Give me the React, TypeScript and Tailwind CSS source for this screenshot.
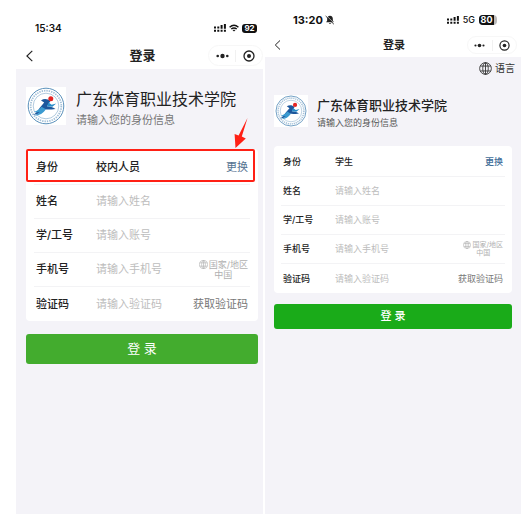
import { useId } from "react";
import clsx from "clsx";

type Variant = "large" | "small";

const fontStack = "font-['Inter','Noto_Sans_CJK_SC',sans-serif]";

const sizes = {
  large: {
    status: "h-[42px] pt-[14px] pl-[19px] pr-[6px]",
    time: "text-[10px] font-semibold",
    header: "h-[27px] pl-[6px]",
    back: "size-[16px]",
    heading: "text-[13px]",
    pill: "h-[21px] w-[55px]",
    dots: "h-[6px] w-[13px]",
    target: "size-[12px]",
    body: "pl-[10px] pr-[5px] pt-[18px]",
    school: "mb-[19px] gap-[10px]",
    logo: "h-[38px] w-[40px]",
    title: "text-[16px] leading-[21px] font-normal text-[#222]",
    subtitle: "text-[11px] leading-[20px] text-[#777]",
    card: "px-[8px] text-[11px]",
    row: "h-[34px]",
    label: "w-[60px] font-medium",
    value: "font-medium",
    change: "text-[#557391] font-normal",
    region: "text-[9px] leading-[10px]",
    globe: "size-[9px]",
    submit: "mt-[13px] h-[30px] bg-[#43ac2e] text-[13px]",
  },
  small: {
    status: "h-[33px] pt-[7px] pl-[28px] pr-[24px]",
    time: "text-[11px] font-bold",
    header: "h-[24px] pl-[6px] pr-[4px]",
    back: "size-[14px]",
    heading: "text-[11px]",
    pill: "h-[18px] w-[50px]",
    dots: "h-[5px] w-[11px]",
    target: "size-[11px]",
    body: "px-[9px] pt-[16px]",
    school: "mb-[15px] gap-[9px]",
    logo: "h-[32px] w-[34px]",
    title: "text-[13px] leading-[17px] font-medium text-[#222]",
    subtitle: "text-[9px] leading-[17px] text-[#555]",
    card: "px-[7px] text-[9px]",
    row: "h-[29px]",
    label: "w-[52px] font-medium",
    value: "font-medium",
    change: "text-[#3f6d99] font-medium",
    region: "text-[7px] leading-[8px]",
    globe: "size-[8px]",
    submit: "mt-[11px] h-[25px] bg-[#1aab19] text-[11px] font-medium",
  },
};

function Globe({ className }: { className: string }) {
  return (
    <svg viewBox="0 0 16 16" className={className} fill="none" stroke="currentColor" strokeWidth="1.1" aria-hidden="true">
      <circle cx="8" cy="8" r="7.2" />
      <ellipse cx="8" cy="8" rx="3.4" ry="7.2" />
      <path d="M8 .8v14.4M1.6 5h12.8M1.6 11h12.8" />
    </svg>
  );
}

function SignalDots() {
  return (
    <svg viewBox="0 0 12 8" className="h-[8px] w-[12px]" fill="currentColor" aria-hidden="true">
      <path d="M0 2.500h2v2H0zM3.300 2.500h2v2h-2zM6.600 1h2v3.800h-2zM9.900 0h2v4.800h-2zM0 5.800h2v2H0zM3.300 5.800h2v2h-2zM6.600 5.800h2v2h-2zM9.900 5.800h2v2h-2z" />
    </svg>
  );
}

function Wifi() {
  return (
    <svg viewBox="0 0 12 9" className="h-[8px] w-[10px]" fill="none" stroke="currentColor" strokeWidth="1.7" aria-hidden="true">
      <path d="M.7 3.500Q6-1.300 11.300 3.500M2.700 5.800Q6 3 9.300 5.800" />
      <path d="M6 8.800 4.200 7Q6 5.900 7.800 7z" fill="currentColor" stroke="none" />
    </svg>
  );
}

function MutedBell() {
  return (
    <svg viewBox="0 0 12 12" className="size-[10px]" aria-hidden="true">
      <path d="M6 .8c-2.400 0-3.400 1.800-3.400 4v1.800L1.400 8.700h9.200L9.400 6.600V4.800c0-2.200-1-4-3.400-4zM4.600 9.500h2.800Q6 11.700 4.600 9.500z" fill="#222" />
      <path d="m1.800 1 9.600 9.400" stroke="#fff" strokeWidth=".8" />
      <path d="m.8 1.200 9.800 9.800" stroke="#222" strokeWidth="1.100" />
    </svg>
  );
}

function SchoolLogo({ className }: { className: string }) {
  return (
    <svg viewBox="0 0 40 38" className={clsx("shrink-0 bg-white", className)} role="img" aria-label="校徽">
      <g fill="none" stroke="#5a90bb">
        <circle cx="20" cy="19" r="17.800" strokeWidth="1" />
        <circle cx="20" cy="19" r="15.300" strokeWidth="1.800" strokeDasharray="1.400 1" stroke="#a3c0d8" />
        <circle cx="20" cy="19" r="12.800" strokeWidth=".7" stroke="#8fb3d0" />
      </g>
      <path d="M15 13.500c3-2.200 6.500-1.900 9.300.8l-3.300 5c3 .2 5.800.9 8.500 2.600-5.300.9-8.400.6-11 .4-2.800 3.200-6.200 5-11.500 5.700 3.300-2 5-4.200 6.800-7.200l4.400-5.200z" fill="#1c579c" />
      <path d="M8 24.500c3.300-.6 5.700-2.400 7.500-4.800l4.400 2.500c-3 4.200-6 6.100-11 6.300 2-1 3.500-2 4.700-3.600-1.800.4-3.400.3-5.600-.4z" fill="#3b9ad0" />
      <path d="m22.500 15.500 3.200 2.200 4.500-1.100-3.800 3.200-5.400-.6z" fill="#268bc9" />
      <circle cx="24.800" cy="11.800" r="2.500" fill="#e32624" />
    </svg>
  );
}

function StatusBar({ variant }: { variant: Variant }) {
  const s = sizes[variant];
  return (
    <div className={clsx("flex items-center justify-between bg-white text-[#111]", s.status)}>
      <div className="flex items-center gap-[2px]">
        <time className={s.time}>{variant === "large" ? "15:34" : "13:20"}</time>
        {variant === "small" && <MutedBell />}
      </div>
      {variant === "large" ? (
        <div className="flex items-center gap-[3px]">
          <SignalDots />
          <Wifi />
          <span className="flex h-[9px] w-[15px] items-center justify-center rounded-[3px] bg-[#111] text-[8px] font-bold text-white">92</span>
        </div>
      ) : (
        <div className="flex items-center gap-[4px]">
          <SignalDots />
          <span className="text-[9px] font-medium">5G</span>
          <span className="flex h-[10px] w-[18px] overflow-hidden rounded-[4px] bg-[#bbb]">
            <span className="flex w-[15px] items-center justify-center bg-[#111] text-[9px] font-bold text-white">80</span>
          </span>
        </div>
      )}
    </div>
  );
}

function TitleBar({ variant }: { variant: Variant }) {
  const s = sizes[variant];
  return (
    <header className={clsx("grid grid-cols-[1fr_auto_1fr] items-center bg-white text-[#222]", s.header)}>
      <button type="button" aria-label="返回" className="justify-self-start">
        <svg viewBox="0 0 14 14" className={s.back} fill="none" stroke="currentColor" strokeWidth="1">
          <path d="M9 2.500 4.300 7 9 11.500" />
        </svg>
      </button>
      <h1 className={clsx("font-bold", s.heading)}>登录</h1>
      <div className={clsx("flex items-center justify-self-end rounded-full border border-[#f7f7f7]", s.pill)}>
        <button type="button" aria-label="更多" className="flex flex-1 justify-center border-r border-[#f1f1f1] py-[3px]">
          <svg viewBox="0 0 13 6" className={s.dots} fill="currentColor">
            <circle cx="1.700" cy="3" r="1.300" />
            <circle cx="6.500" cy="3" r="2.200" />
            <circle cx="11.300" cy="3" r="1.300" />
          </svg>
        </button>
        <button type="button" aria-label="关闭" className="flex flex-1 justify-center">
          <svg viewBox="0 0 12 12" className={s.target} fill="none" stroke="currentColor" strokeWidth="1.300">
            <circle cx="6" cy="6" r="5" />
            <circle cx="6" cy="6" r="2" fill="currentColor" stroke="none" />
          </svg>
        </button>
      </div>
    </header>
  );
}

const fields = [
  { key: "name", label: "姓名", placeholder: "请输入姓名" },
  { key: "account", label: "学/工号", placeholder: "请输入账号" },
  { key: "phone", label: "手机号", placeholder: "请输入手机号" },
  { key: "code", label: "验证码", placeholder: "请输入验证码" },
];

function Callout() {
  return (
    <div className="pointer-events-none absolute inset-x-0 top-0 mr-[3px] h-[33px] rounded-[2px] border-2 border-[#ff2015]">
      <svg viewBox="0 0 16 34" className="absolute right-[4px] bottom-full h-[34px] w-[16px]" fill="#ff2015" aria-hidden="true">
        <path d="M14.500 1 8.800 19.500l4 1.900L2.500 31 1.600 17l4 1.400z" />
      </svg>
    </div>
  );
}

function LoginScreen({ variant, identity }: { variant: Variant; identity: string }) {
  const s = sizes[variant];
  const id = useId();
  const row = clsx("flex items-center px-[2px]", s.row);
  return (
    <section className="flex min-w-0 flex-col bg-[#f4f3f8]">
      <StatusBar variant={variant} />
      <TitleBar variant={variant} />
      {variant === "small" && (
        <div className="flex h-[22px] items-center justify-end pr-[6px]">
          <button type="button" className="flex items-center gap-[3px] text-[10px] text-[#333]">
            <Globe className="size-[13px]" />
            语言
          </button>
        </div>
      )}
      <form className={s.body} onSubmit={(e) => e.preventDefault()}>
        <div className={clsx("flex items-start", s.school)}>
          <SchoolLogo className={s.logo} />
          <div className="pt-[2px] whitespace-nowrap">
            <h2 className={s.title}>广东体育职业技术学院</h2>
            <p className={s.subtitle}>请输入您的身份信息</p>
          </div>
        </div>
        <div className={clsx("relative rounded-[4px] bg-white pt-[2px] whitespace-nowrap text-[#222]", s.card)}>
          <div className="divide-y divide-[#f3f3f5]">
            <div className={row}>
              <span className={s.label}>身份</span>
              <span className={clsx("flex-1", s.value)}>{identity}</span>
              <button type="button" className={s.change}>更换</button>
            </div>
            {fields.map((f) => (
              <div key={f.key} className={row}>
                <label htmlFor={id + f.key} className={clsx("shrink-0", s.label)}>{f.label}</label>
                <input
                  id={id + f.key}
                  type="text"
                  placeholder={f.placeholder}
                  className="min-w-0 flex-1 bg-transparent outline-none placeholder:text-[#bdbdbd]"
                />
                {f.key === "phone" && (
                  <button type="button" className={clsx("flex flex-col items-center text-[#b0b0b0]", s.region)}>
                    <span className="flex items-center gap-px">
                      <Globe className={s.globe} />
                      国家/地区
                    </span>
                    <span>中国</span>
                  </button>
                )}
                {f.key === "code" && (
                  <button type="button" className="text-[#777]">获取验证码</button>
                )}
              </div>
            ))}
          </div>
          {variant === "large" && <Callout />}
        </div>
        <button type="submit" className={clsx("w-full rounded-[3px] text-white", s.submit)}>登 录</button>
      </form>
    </section>
  );
}

export default function App() {
  return (
    <main className={clsx("grid min-h-screen grid-cols-[247fr_256fr] gap-[2px] bg-white pr-[4px] pb-[7px] pl-[16px]", fontStack)}>
      <LoginScreen variant="large" identity="校内人员" />
      <LoginScreen variant="small" identity="学生" />
    </main>
  );
}
